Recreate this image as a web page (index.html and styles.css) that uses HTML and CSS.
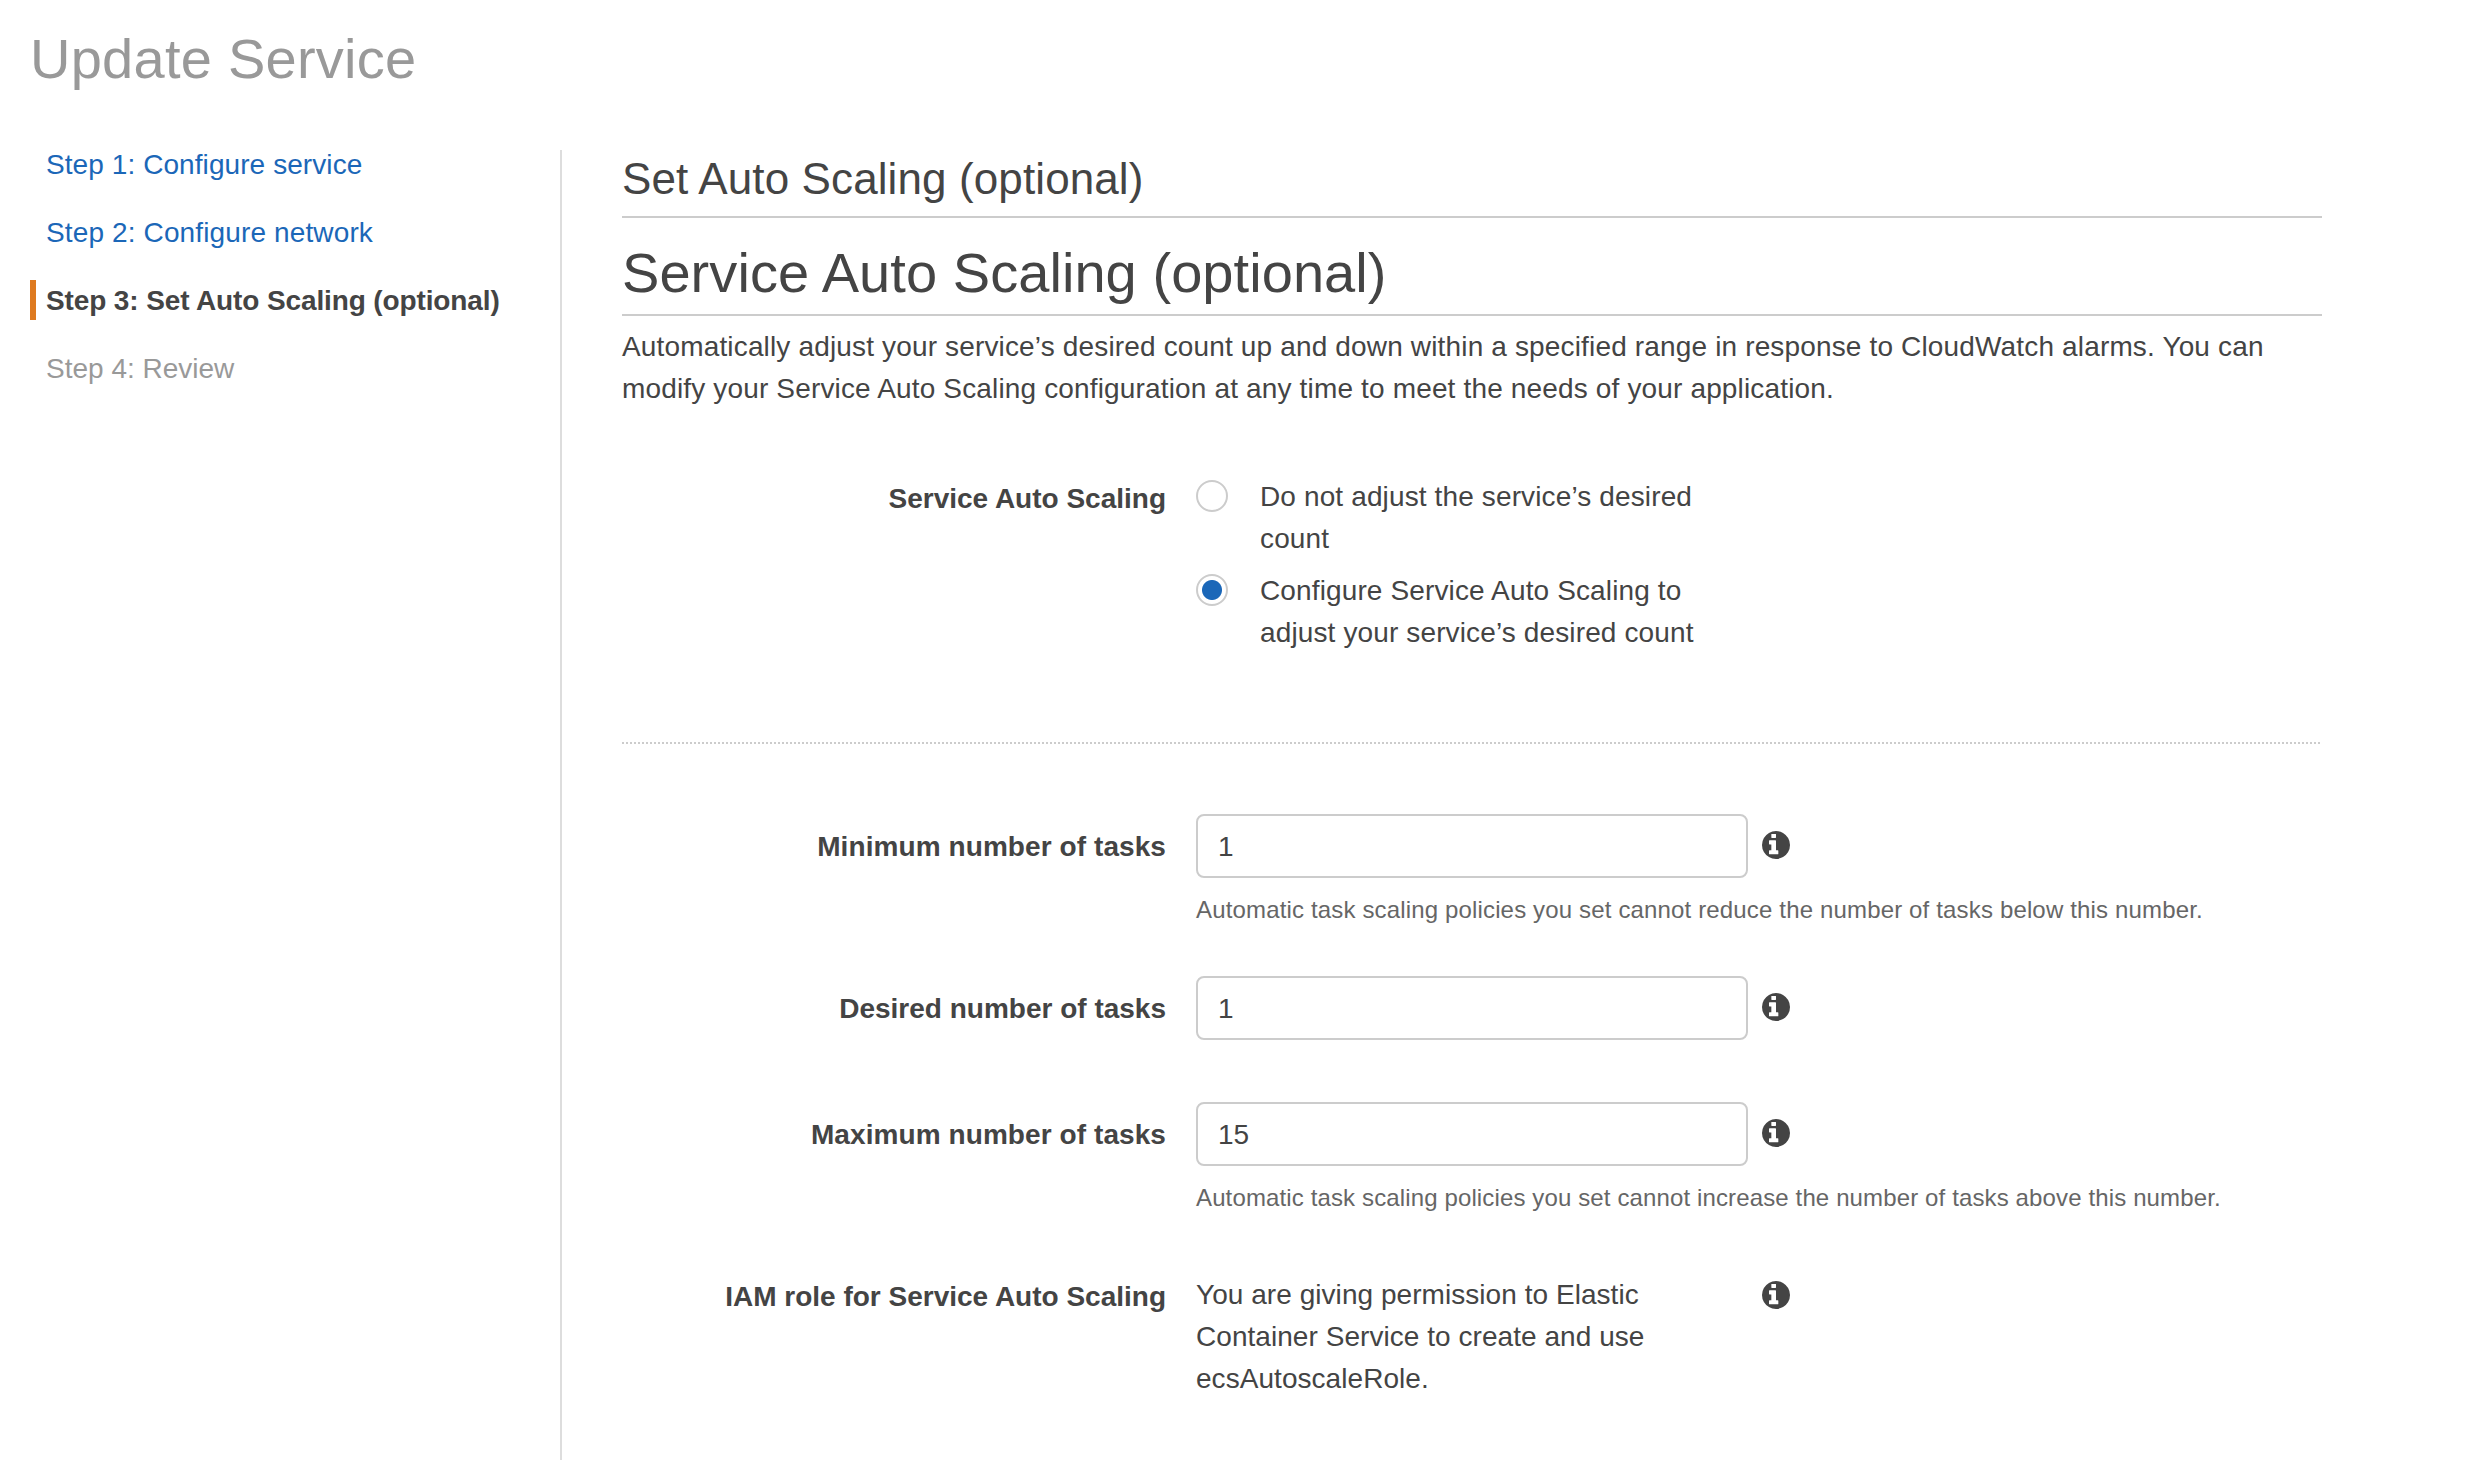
FILE: index.html
```html
<!DOCTYPE html>
<html lang="en">
<head>
<meta charset="utf-8">
<title>Update Service</title>
<link rel="stylesheet" href="styles.css">
</head>
<body>
<svg class="sprite" aria-hidden="true">
  <symbol id="info" viewBox="128 128 1536 1536">
    <path d="M1024 1376v-160q0-14-9-23t-23-9h-96v-512q0-14-9-23t-23-9h-320q-14 0-23 9t-9 23v160q0 14 9 23t23 9h96v320h-96q-14 0-23 9t-9 23v160q0 14 9 23t23 9h448q14 0 23-9t9-23zm-128-896v-160q0-14-9-23t-23-9h-192q-14 0-23 9t-9 23v160q0 14 9 23t23 9h192q14 0 23-9t9-23zm768 416q0 209-103 385.500t-279.500 279.500-385.500 103-385.500-103-279.500-279.500-103-385.500 103-385.500 279.500-279.500 385.500-103 385.500 103 279.500 279.500 103 385.500z"/>
  </symbol>
</svg>
<h1 class="page-title">Update Service</h1>
<div class="wizard">
  <nav class="steps">
    <a class="step" href="#">Step 1: Configure service</a>
    <a class="step" href="#">Step 2: Configure network</a>
    <div class="step step-current">Step 3: Set Auto Scaling (optional)</div>
    <div class="step step-disabled">Step 4: Review</div>
  </nav>
  <main class="content">
    <h2 class="section-title">Set Auto Scaling (optional)</h2>
    <h1 class="panel-title">Service Auto Scaling (optional)</h1>
    <p class="intro">Automatically adjust your service’s desired count up and down within a specified range in response to CloudWatch alarms. You can<br>modify your Service Auto Scaling configuration at any time to meet the needs of your application.</p>

    <div class="row row-mode">
      <div class="label">Service Auto Scaling</div>
      <div class="options">
        <label class="option"><input class="radio" type="radio" name="mode"><span>Do not adjust the service’s desired<br>count</span></label>
        <label class="option"><input class="radio" type="radio" name="mode" checked><span>Configure Service Auto Scaling to<br>adjust your service’s desired count</span></label>
      </div>
    </div>

    <hr class="separator">

    <div class="row row-min">
      <label class="label" for="min">Minimum number of tasks</label>
      <input class="field" id="min" value="1">
      <svg class="info"><use href="#info"/></svg>
      <p class="help">Automatic task scaling policies you set cannot reduce the number of tasks below this number.</p>
    </div>
    <div class="row row-desired">
      <label class="label" for="desired">Desired number of tasks</label>
      <input class="field" id="desired" value="1">
      <svg class="info"><use href="#info"/></svg>
    </div>
    <div class="row row-max">
      <label class="label" for="max">Maximum number of tasks</label>
      <input class="field" id="max" value="15">
      <svg class="info"><use href="#info"/></svg>
      <p class="help">Automatic task scaling policies you set cannot increase the number of tasks above this number.</p>
    </div>
    <div class="row row-role">
      <div class="label">IAM role for Service Auto Scaling</div>
      <p class="role-text">You are giving permission to Elastic<br>Container Service to create and use<br>ecsAutoscaleRole.</p>
      <svg class="info"><use href="#info"/></svg>
    </div>
  </main>
</div>
</body>
</html>
```
FILE: styles.css
```css
* { box-sizing: border-box; }

body {
  margin: 0;
  height: 1460px;
  overflow: hidden;
  display: flex;
  flex-direction: column;
  background: #fff;
  color: #444;
  font: 28px/42px "Liberation Sans", Arial, sans-serif;
  letter-spacing: 0.13px;
  white-space: nowrap;
}

h1, h2, p { margin: 0; font-weight: normal; }

.sprite { display: none; }

.page-title {
  height: 150px;
  padding: 27px 0 0 30px;
  color: #999;
  font-size: 56px;
  line-height: 64px;
  letter-spacing: 0.25px;
}

.wizard {
  flex: 1;
  display: grid;
  grid-template-columns: 562px 1700px;
  column-gap: 60px;
}

/* Step navigation */
.steps {
  display: flex;
  flex-direction: column;
  gap: 28px;
  padding-left: 30px;
  border-right: 2px solid #ddd;
}
.step {
  height: 40px;
  padding-left: 16px;
  color: #1b67b8;
  line-height: 42px;
  text-decoration: none;
}
.step:first-child { margin-top: -6px; letter-spacing: 0.08px; }
.step-current {
  padding-left: 10px;
  border-left: 6px solid #de7a20;
  color: #444;
  font-weight: bold;
  letter-spacing: -0.12px;
}
.step-disabled { color: #999; letter-spacing: 0; }

/* Headings */
.section-title {
  height: 68px;
  padding-top: 4px;
  border-bottom: 2px solid #ccc;
  font-size: 44px;
  line-height: 50px;
  letter-spacing: 0.11px;
}
.panel-title {
  height: 98px;
  padding-top: 23px;
  border-bottom: 2px solid #ccc;
  font-size: 56px;
  line-height: 64px;
  letter-spacing: 0.06px;
}
.intro { height: 160px; padding-top: 10px; letter-spacing: 0.155px; }

/* Form rows */
.row {
  display: grid;
  grid-template-columns: 560px 552px 28px;
  column-gap: 14px;
  align-items: start;
  align-content: start;
}
.row-mode { height: 266px; }
.row-min, .row-max { height: 162px; }
.row-desired { height: 126px; }

.label {
  padding: 12px 16px 0 0;
  font-weight: bold;
  letter-spacing: 0;
  text-align: right;
}
.row-mode .label { padding-top: 2px; }
.row-min .label, .row-max .label { letter-spacing: 0.08px; }

.options { display: flex; flex-direction: column; gap: 10px; }
.option { display: flex; gap: 32px; }
.radio {
  appearance: none;
  width: 32px;
  height: 32px;
  margin: 4px 0 0;
  border: 2px solid #ccc;
  border-radius: 50%;
  background: #fff;
}
.radio:checked { background: radial-gradient(circle, #1b67b8 9.5px, #fff 10.5px); }

.separator {
  width: 100%;
  height: 2px;
  margin: 0 0 70px;
  border: 0;
  background: repeating-linear-gradient(90deg, #ccc 0 2px, transparent 2px 4px);
}

.field {
  width: 552px;
  height: 64px;
  padding: 2px 0 0 20px;
  border: 2px solid #ccc;
  border-radius: 8px;
  background: #fff;
  color: inherit;
  font: inherit;
}
.info { width: 28px; height: 28px; margin-top: 16.5px; fill: #444; }
.help {
  grid-column: 2 / -1;
  margin-top: 14px;
  color: #666;
  font-size: 24px;
  line-height: 36px;
  letter-spacing: 0.155px;
}
.row-max .help { letter-spacing: 0.13px; }
.role-text { padding-top: 10px; letter-spacing: 0.05px; }
```
